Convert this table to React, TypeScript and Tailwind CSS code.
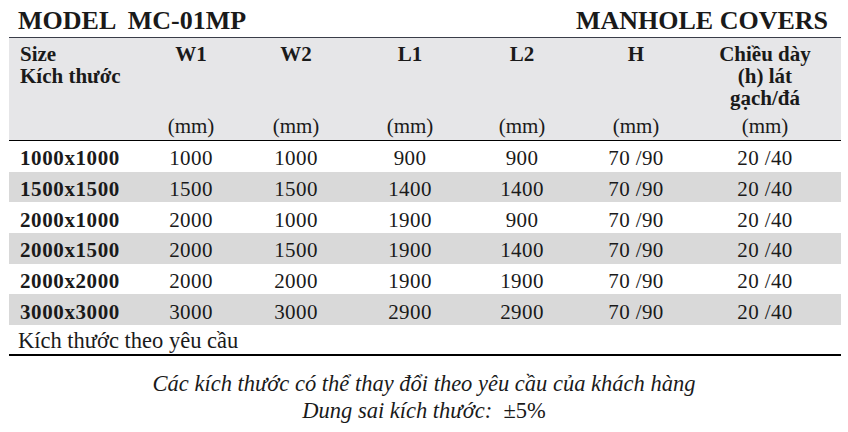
import React from "react";

const rows = [
  ["1000x1000", "1000", "1000", "900", "900", "70 /90", "20 /40"],
  ["1500x1500", "1500", "1500", "1400", "1400", "70 /90", "20 /40"],
  ["2000x1000", "2000", "1000", "1900", "900", "70 /90", "20 /40"],
  ["2000x1500", "2000", "1500", "1900", "1400", "70 /90", "20 /40"],
  ["2000x2000", "2000", "2000", "1900", "1900", "70 /90", "20 /40"],
  ["3000x3000", "3000", "3000", "2900", "2900", "70 /90", "20 /40"],
];

const grid = "grid grid-cols-[131px_102px_108px_120px_104px_124px_1fr]";

export default function App() {
  return (
    <div
      className="w-[848px] h-[432px] bg-white text-[#1a1a1a] overflow-hidden"
      style={{ fontFamily: "'Liberation Serif', 'Times New Roman', serif" }}
    >
      {/* title bar */}
      <div className="flex justify-between items-end h-[37px] pl-[18px] pr-[20px] pb-[3px] font-bold text-[26px] leading-none">
        <span className="whitespace-pre">MODEL  MC-01MP</span>
        <span>MANHOLE COVERS</span>
      </div>

      <div className="mx-[9px] w-[832px]">
        {/* header */}
        <div className={`${grid} h-[104px] bg-[#e6e6e8] border-t border-[#3a3d48] border-b border-b-black text-[21px] leading-[22px]`}>
          <div className="pl-[11px] pt-[5px] font-bold">
            <div>Size</div>
            <div>Kích thước</div>
          </div>
          {["W1", "W2", "L1", "L2", "H"].map((h) => (
            <div key={h} className="flex flex-col justify-between items-center pt-[5px] pb-[3px]">
              <span className="font-bold">{h}</span>
              <span>(mm)</span>
            </div>
          ))}
          <div className="flex flex-col justify-between items-center pt-[5px] pb-[3px] pr-[9px]">
            <span className="font-bold text-center leading-[22px]">
              Chiều dày
              <br />
              (h) lát
              <br />
              gạch/đá
            </span>
            <span>(mm)</span>
          </div>
        </div>

        {/* rows */}
        {rows.map((r, i) => (
          <div
            key={r[0]}
            className={`${grid} h-[30.7px] items-center pt-[5px] text-[21px] leading-none ${i % 2 === 1 ? "bg-[#d9d9d9]" : ""}`}
          >
            <div className="pl-[11px] font-bold tracking-[0.6px]">{r[0]}</div>
            {r.slice(1, 6).map((c, j) => (
              <div key={j} className="text-center tracking-[0.4px]">{c}</div>
            ))}
            <div className="text-center tracking-[0.4px] pr-[9px]">{r[6]}</div>
          </div>
        ))}

        <div className="h-[31px] border-b-2 border-black pl-[9px] pt-[5px] text-[22.5px] leading-none">
          Kích thước theo yêu cầu
        </div>
      </div>

      {/* notes */}
      <div className="flex flex-col items-center pt-[14px] italic text-[22.5px] leading-[27px]">
        <span>Các kích thước có thể thay đổi theo yêu cầu của khách hàng</span>
        <span>
          Dung sai kích thước:&nbsp; <span className="not-italic">±5%</span>
        </span>
      </div>
    </div>
  );
}
